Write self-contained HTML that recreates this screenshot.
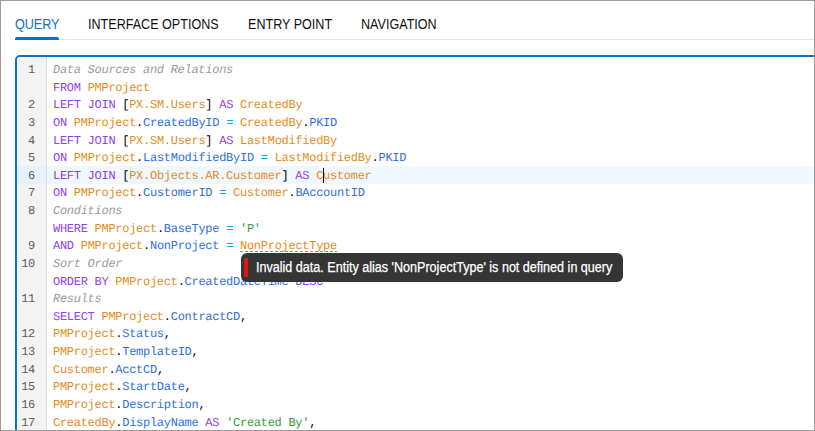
<!DOCTYPE html>
<html><head><meta charset="utf-8">
<style>
html,body{margin:0;padding:0}
body{width:815px;height:431px;position:relative;overflow:hidden;background:#fff;font-family:"Liberation Sans",sans-serif}
#frame{position:absolute;left:0;top:0;width:815px;height:431px;box-sizing:border-box;border:1px solid #9c9c9c;z-index:50;pointer-events:none}
.tab{position:absolute;top:16px;font-size:14px;transform:scaleX(0.898);transform-origin:0 0;color:#111;white-space:nowrap;line-height:16px}
.tab.active{color:#0671cb}
#tabline{position:absolute;left:15px;top:39px;width:800px;height:1px;background:#e4e4e4}
#tabul{position:absolute;left:15px;top:37px;width:44px;height:3px;background:#0671cb;border-radius:2px 2px 0 0}
#editor{position:absolute;left:15px;top:55px;width:840px;height:420px;border:2px solid #0b74c6;border-radius:5px;overflow:hidden;background:#fff}
#gutter{position:absolute;left:0;top:0;width:29px;height:100%;background:#f3f3f3;border-right:1px solid #dadada}
#lines{position:absolute;left:0;top:3px;width:100%}
.row{position:relative;height:17.63px;white-space:pre;font-family:"Liberation Mono",monospace;font-size:12px;letter-spacing:-0.279px;line-height:17.63px;text-rendering:geometricPrecision}

.ln{position:absolute;left:0;top:2px;width:18px;height:100%;text-align:right;color:#5e5e5e;padding-right:11px}
.code{position:absolute;left:36px;top:2px;color:#222}
.c{color:#9a9a9a;font-style:italic}
.k{color:#8e3ff0}
.t{color:#e38c1c}
.f{color:#2f6fe0}
.o{color:#1aa0e6}
.s{color:#3c9a3c}
.p{color:#000}
#hl{position:absolute;left:30px;top:109px;width:830px;height:18px;background:#f0f7fe}
#hlg{position:absolute;left:0;top:109px;width:29px;height:18px;background:#e6f1fb}
#wavy{position:absolute;left:240px;top:251px;width:97px;height:1px;background:repeating-linear-gradient(90deg,#ec6a6a 0px,#ec6a6a 3px,rgba(255,255,255,0) 3px,rgba(255,255,255,0) 5px);z-index:5}
#tip{position:absolute;left:241px;top:253px;width:382px;height:29px;background:#353535;border-radius:6px;z-index:10}
#tipbar{position:absolute;left:3px;top:5px;width:4px;height:19px;background:#e01616}
#tiptext{position:absolute;left:15px;top:6px;color:#fff;-webkit-text-stroke:0.25px #fff;font-size:14px;transform:scaleX(0.898);transform-origin:0 0;white-space:nowrap;line-height:16px}
#cursor{position:absolute;width:1px;height:15px;background:#111}
</style></head><body>
<div id="frame"></div>
<div class="tab active" style="left:15px">QUERY</div>
<div class="tab" style="left:88px">INTERFACE OPTIONS</div>
<div class="tab" style="left:248px">ENTRY POINT</div>
<div class="tab" style="left:361px">NAVIGATION</div>
<div id="tabline"></div>
<div id="tabul"></div>
<div id="editor">
 <div id="gutter"></div>
 <div id="hl"></div><div id="hlg"></div>
 <div id="cursor" style="left:306px;top:111px;z-index:3"></div>
 <div id="lines">
  <div class="row"><span class="ln">1</span><span class="code"><span class="c">Data Sources and Relations</span></span></div>
  <div class="row"><span class="ln"></span><span class="code"><span class="k">FROM</span> <span class="t">PMProject</span></span></div>
  <div class="row"><span class="ln">2</span><span class="code"><span class="k">LEFT JOIN</span> <span class="p">[</span><span class="t">PX.SM.Users</span><span class="p">]</span> <span class="k">AS</span> <span class="t">CreatedBy</span></span></div>
  <div class="row"><span class="ln">3</span><span class="code"><span class="k">ON</span> <span class="t">PMProject</span><span class="p">.</span><span class="f">CreatedByID</span> <span class="o">=</span> <span class="t">CreatedBy</span><span class="p">.</span><span class="f">PKID</span></span></div>
  <div class="row"><span class="ln">4</span><span class="code"><span class="k">LEFT JOIN</span> <span class="p">[</span><span class="t">PX.SM.Users</span><span class="p">]</span> <span class="k">AS</span> <span class="t">LastModifiedBy</span></span></div>
  <div class="row"><span class="ln">5</span><span class="code"><span class="k">ON</span> <span class="t">PMProject</span><span class="p">.</span><span class="f">LastModifiedByID</span> <span class="o">=</span> <span class="t">LastModifiedBy</span><span class="p">.</span><span class="f">PKID</span></span></div>
  <div class="row"><span class="ln">6</span><span class="code"><span class="k">LEFT JOIN</span> <span class="p">[</span><span class="t">PX.Objects.AR.Customer</span><span class="p">]</span> <span class="k">AS</span> <span class="t">Customer</span></span></div>
  <div class="row"><span class="ln">7</span><span class="code"><span class="k">ON</span> <span class="t">PMProject</span><span class="p">.</span><span class="f">CustomerID</span> <span class="o">=</span> <span class="t">Customer</span><span class="p">.</span><span class="f">BAccountID</span></span></div>
  <div class="row"><span class="ln">8</span><span class="code"><span class="c">Conditions</span></span></div>
  <div class="row"><span class="ln"></span><span class="code"><span class="k">WHERE</span> <span class="t">PMProject</span><span class="p">.</span><span class="f">BaseType</span> <span class="o">=</span> <span class="s">'P'</span></span></div>
  <div class="row"><span class="ln">9</span><span class="code"><span class="k">AND</span> <span class="t">PMProject</span><span class="p">.</span><span class="f">NonProject</span> <span class="o">=</span> <span class="t err">NonProjectType</span></span></div>
  <div class="row"><span class="ln">10</span><span class="code"><span class="c">Sort Order</span></span></div>
  <div class="row"><span class="ln"></span><span class="code"><span class="k">ORDER BY</span> <span class="t">PMProject</span><span class="p">.</span><span class="f">CreatedDateTime</span> <span class="k">DESC</span></span></div>
  <div class="row"><span class="ln">11</span><span class="code"><span class="c">Results</span></span></div>
  <div class="row"><span class="ln"></span><span class="code"><span class="k">SELECT</span> <span class="t">PMProject</span><span class="p">.</span><span class="f">ContractCD</span><span class="p">,</span></span></div>
  <div class="row"><span class="ln">12</span><span class="code"><span class="t">PMProject</span><span class="p">.</span><span class="f">Status</span><span class="p">,</span></span></div>
  <div class="row"><span class="ln">13</span><span class="code"><span class="t">PMProject</span><span class="p">.</span><span class="f">TemplateID</span><span class="p">,</span></span></div>
  <div class="row"><span class="ln">14</span><span class="code"><span class="t">Customer</span><span class="p">.</span><span class="f">AcctCD</span><span class="p">,</span></span></div>
  <div class="row"><span class="ln">15</span><span class="code"><span class="t">PMProject</span><span class="p">.</span><span class="f">StartDate</span><span class="p">,</span></span></div>
  <div class="row"><span class="ln">16</span><span class="code"><span class="t">PMProject</span><span class="p">.</span><span class="f">Description</span><span class="p">,</span></span></div>
  <div class="row"><span class="ln">17</span><span class="code"><span class="t">CreatedBy</span><span class="p">.</span><span class="f">DisplayName</span> <span class="k">AS</span> <span class="s">'Created By'</span><span class="p">,</span></span></div>
 </div>
</div>
<div id="wavy"></div>
<div id="tip"><div id="tipbar"></div><div id="tiptext">Invalid data. Entity alias 'NonProjectType' is not defined in query</div></div>
</body></html>
